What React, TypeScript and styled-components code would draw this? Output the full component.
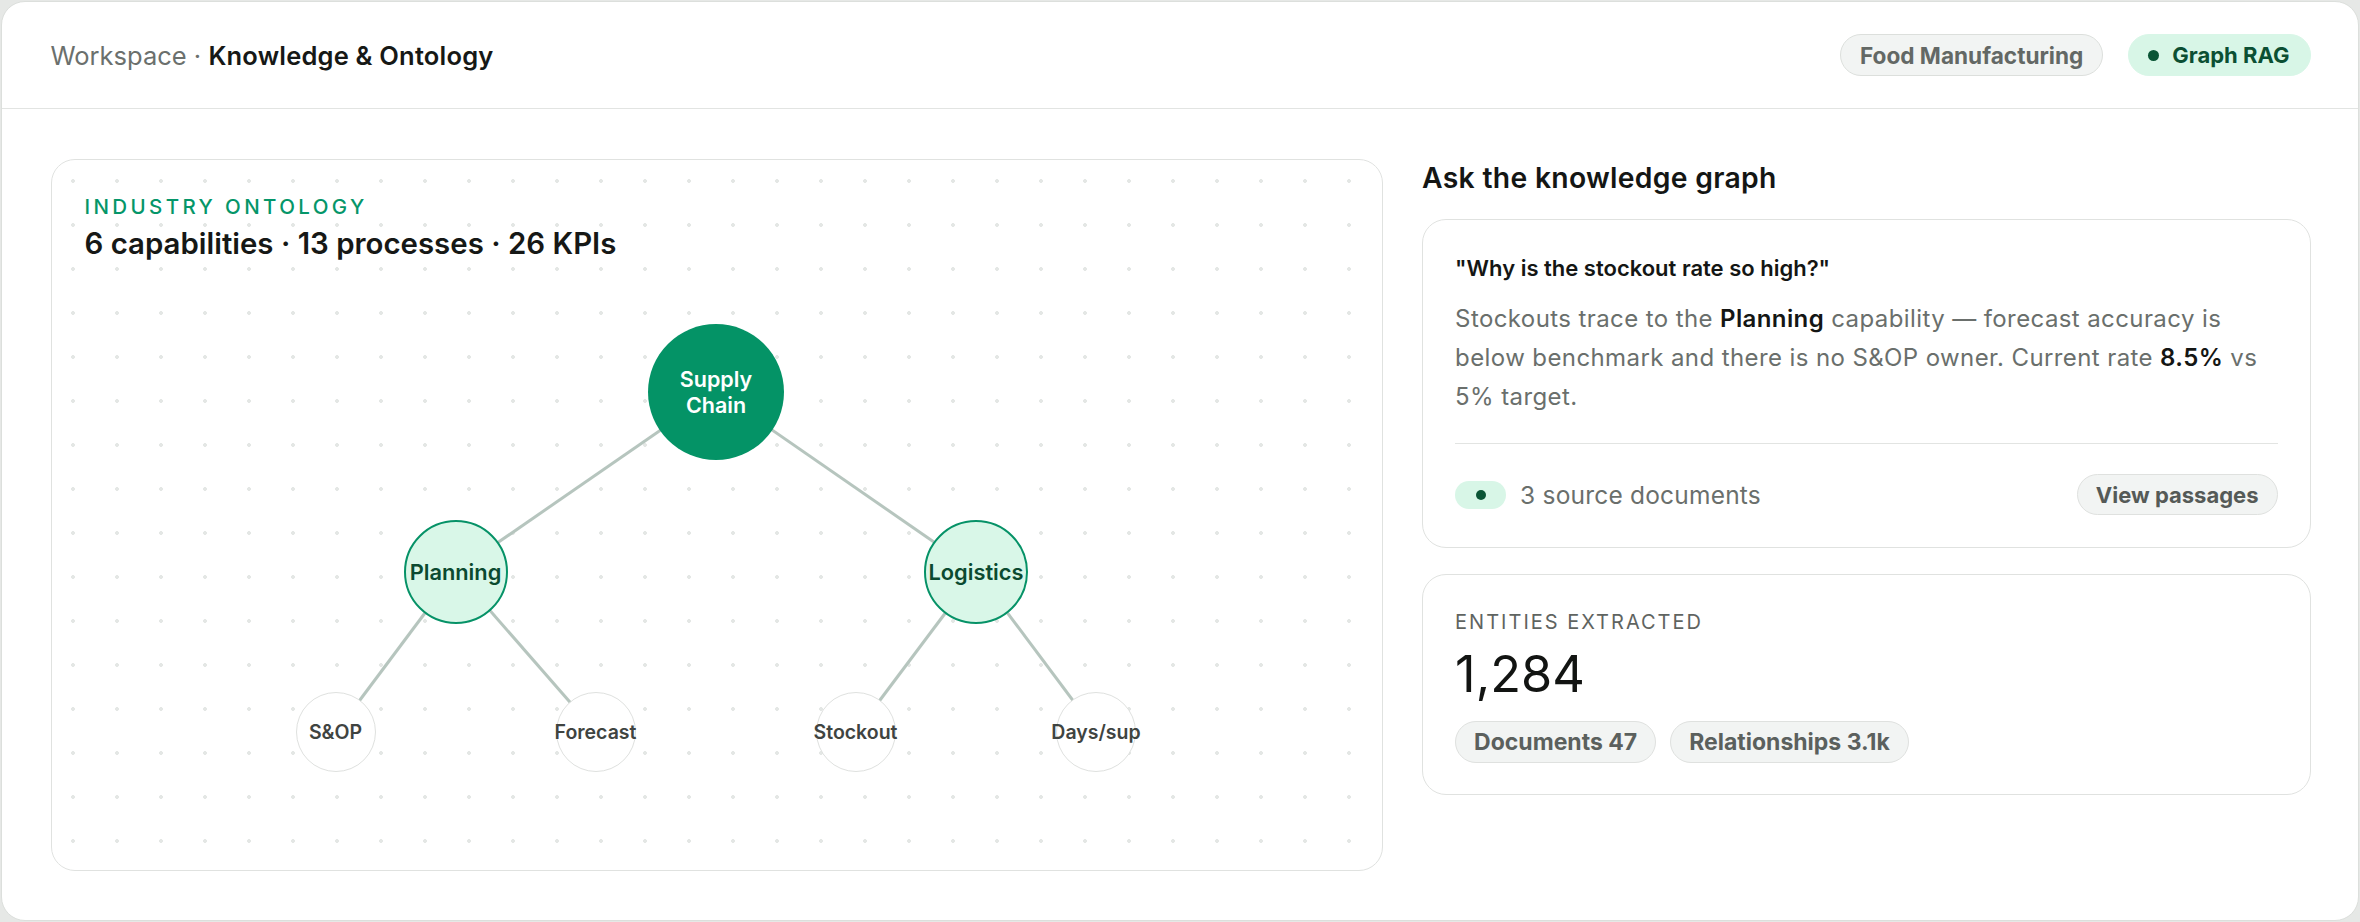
import styled, { createGlobalStyle } from 'styled-components'

const GlobalStyle = createGlobalStyle`
  html, body {
    margin: 0;
    padding: 0;
    background: #e6e8e6;
  }
  body {
    font-family: Inter, 'Noto Sans', sans-serif;
    -webkit-font-smoothing: antialiased;
  }
  * {
    box-sizing: border-box;
  }
`

type NodeKind = 'root' | 'capability' | 'kpi'

interface GraphNode {
  id: string
  label: string
  kind: NodeKind
  x: number
  y: number
}

const nodes: GraphNode[] = [
  { id: 'supply', label: 'Supply Chain', kind: 'root', x: 631.5, y: 129.5 },
  { id: 'planning', label: 'Planning', kind: 'capability', x: 371, y: 309.5 },
  { id: 'logistics', label: 'Logistics', kind: 'capability', x: 891.5, y: 309.5 },
  { id: 'sop', label: 'S&OP', kind: 'kpi', x: 251, y: 470 },
  { id: 'forecast', label: 'Forecast', kind: 'kpi', x: 511, y: 470 },
  { id: 'stockout', label: 'Stockout', kind: 'kpi', x: 771, y: 470 },
  { id: 'days', label: 'Days/sup', kind: 'kpi', x: 1011.5, y: 470 },
]

const edges: [string, string][] = [
  ['supply', 'planning'],
  ['supply', 'logistics'],
  ['planning', 'sop'],
  ['planning', 'forecast'],
  ['logistics', 'stockout'],
  ['logistics', 'days'],
]

const byId = (id: string) => nodes.find((n) => n.id === id)!

const App = () => {
  return (
    <>
      <GlobalStyle />
      <Frame>
        <TopBar>
          <Crumb>
            Workspace · <strong>Knowledge &amp; Ontology</strong>
          </Crumb>
          <Badges>
            <Badge>Food Manufacturing</Badge>
            <Badge $live>
              <Dot />
              Graph RAG
            </Badge>
          </Badges>
        </TopBar>

        <Main>
          <OntologyCard>
            <Eyebrow>Industry ontology</Eyebrow>
            <CardTitle>6 capabilities · 13 processes · 26 KPIs</CardTitle>
            <Canvas>
              <EdgeLayer>
                {edges.map(([a, b]) => {
                  const from = byId(a)
                  const to = byId(b)
                  return (
                    <line
                      key={a + b}
                      x1={from.x}
                      y1={from.y}
                      x2={to.x}
                      y2={to.y}
                      stroke="#b6c5be"
                      strokeWidth={3}
                    />
                  )
                })}
              </EdgeLayer>
              {nodes.map((node) => (
                <Node key={node.id} $kind={node.kind} style={{ left: node.x, top: node.y }}>
                  {node.label}
                </Node>
              ))}
            </Canvas>
          </OntologyCard>

          <Side>
            <SideTitle>Ask the knowledge graph</SideTitle>
            <Panel>
              <Question>"Why is the stockout rate so high?"</Question>
              <Answer>
                Stockouts trace to the <strong>Planning</strong> capability — forecast accuracy is
                <br />
                below benchmark and there is no S&amp;OP owner. Current rate <strong>8.5%</strong> vs
                <br />
                5% target.
              </Answer>
              <PanelFooter>
                <Sources>
                  <SourcePill>
                    <Dot />
                  </SourcePill>
                  3 source documents
                </Sources>
                <GhostButton>View passages</GhostButton>
              </PanelFooter>
            </Panel>

            <Panel $stat>
              <StatLabel>Entities extracted</StatLabel>
              <StatValue>1,284</StatValue>
              <Tags>
                <Tag>Documents 47</Tag>
                <Tag>Relationships 3.1k</Tag>
              </Tags>
            </Panel>
          </Side>
        </Main>
      </Frame>
    </>
  )
}

const Frame = styled.div`
  margin: 1px;
  height: 920px;
  background: #fff;
  border: 1.5px solid #dcdfdc;
  border-radius: 24px;
  display: flex;
  flex-direction: column;
  overflow: hidden;
`

const TopBar = styled.header`
  height: 107px;
  flex-shrink: 0;
  display: flex;
  align-items: center;
  justify-content: space-between;
  padding: 0 47.5px 0 48.5px;
  border-bottom: 1.5px solid #e2e4e2;
`

const Crumb = styled.div`
  font-size: 25.5px;
  color: #6b706d;

  strong {
    font-weight: 600;
    color: #161816;
    letter-spacing: 0.2px;
  }
`

const Badges = styled.div`
  display: flex;
  align-items: center;
  gap: 25px;
`

const Badge = styled.span<{ $live?: boolean }>`
  display: inline-flex;
  align-items: center;
  gap: 13px;
  height: 42px;
  padding: ${(p) => (p.$live ? '0 20px 0 19px' : '0 19px')};
  border-radius: 21px;
  border: 1.5px solid ${(p) => (p.$live ? '#d8f6e7' : '#dcdfdc')};
  background: ${(p) => (p.$live ? '#d8f6e7' : '#f2f4f3')};
  color: ${(p) => (p.$live ? '#0b4f33' : '#636865')};
  font-size: ${(p) => (p.$live ? '22px' : '22.6px')};
  font-weight: 700;
`

const Dot = styled.span`
  width: 11px;
  height: 11px;
  border-radius: 50%;
  background: #0b5536;
  flex-shrink: 0;
`

const Main = styled.main`
  display: grid;
  grid-template-columns: 3fr 2fr;
  gap: 39px;
  padding: 50px 47.5px 0 48.5px;
  align-items: start;
`

const OntologyCard = styled.section`
  height: 712px;
  display: flex;
  flex-direction: column;
  padding: 34px 33px 34px;
  border: 1.5px solid #e0e2e0;
  border-radius: 24px;
  background-color: #fff;
  background-image: radial-gradient(circle, #e4e7e5 1.6px, transparent 2.2px);
  background-size: 44px 44px;
  background-position: -1px -1px;
`

const Eyebrow = styled.div`
  font-size: 20.5px;
  line-height: 26px;
  font-weight: 500;
  letter-spacing: 0.165em;
  text-transform: uppercase;
  color: #059669;
`

const CardTitle = styled.h2`
  margin: 6px 0 0;
  font-size: 29.4px;
  line-height: 36px;
  font-weight: 600;
  color: #161816;
`

const Canvas = styled.div`
  position: relative;
  flex: 1;
`

const EdgeLayer = styled.svg`
  position: absolute;
  inset: 0;
  width: 100%;
  height: 100%;
  overflow: visible;
`

const nodeSize: Record<NodeKind, number> = { root: 136, capability: 104, kpi: 80 }

const Node = styled.div<{ $kind: NodeKind }>`
  position: absolute;
  width: ${(p) => nodeSize[p.$kind]}px;
  height: ${(p) => nodeSize[p.$kind]}px;
  transform: translate(-50%, -50%);
  border-radius: 50%;
  display: flex;
  align-items: center;
  justify-content: center;
  text-align: center;
  white-space: ${(p) => (p.$kind === 'root' ? 'normal' : 'nowrap')};
  font-weight: 600;
  ${(p) =>
    p.$kind === 'root'
      ? `
    background: #049366;
    color: #fff;
    font-size: 21.5px;
    line-height: 26px;
    padding: 0 26px;
  `
      : p.$kind === 'capability'
        ? `
    background: #d9f7e8;
    border: 2px solid #069267;
    color: #0b4a30;
    font-size: 21.8px;
  `
        : `
    background: #fff;
    border: 1.5px solid #dfe1df;
    color: #3f4441;
    font-size: 19.5px;
  `}
`

const Side = styled.div`
  display: flex;
  flex-direction: column;
  padding-top: 2px;
`

const SideTitle = styled.h2`
  margin: 0 0 24px;
  font-size: 28.3px;
  line-height: 34px;
  font-weight: 600;
  letter-spacing: 0.3px;
  color: #141614;
`

const Panel = styled.div<{ $stat?: boolean }>`
  border: 1.5px solid #e0e2e0;
  border-radius: 24px;
  padding: ${(p) => (p.$stat ? '33.5px 32px 31.5px' : '33px 32px 32px')};
  margin-top: ${(p) => (p.$stat ? '26px' : '0')};
  background: #fff;
`

const Question = styled.div`
  font-size: 22px;
  line-height: 30px;
  font-weight: 600;
  color: #141614;
`

const Answer = styled.p`
  margin: 16px 0 0;
  font-size: 24px;
  line-height: 39px;
  letter-spacing: 0.4px;
  white-space: nowrap;
  color: #6a6f6c;

  strong {
    font-weight: 600;
    color: #141614;
  }
`

const PanelFooter = styled.div`
  margin-top: 27px;
  padding-top: 30px;
  border-top: 1.5px solid #e2e4e2;
  display: flex;
  align-items: center;
  justify-content: space-between;
`

const Sources = styled.div`
  display: flex;
  align-items: center;
  gap: 14px;
  font-size: 24.5px;
  letter-spacing: 0.2px;
  color: #6a6f6c;
`

const SourcePill = styled.span`
  display: inline-flex;
  align-items: center;
  justify-content: center;
  width: 51px;
  height: 28px;
  border-radius: 14px;
  background: #d8f6e7;

  span {
    width: 10px;
    height: 10px;
  }
`

const GhostButton = styled.button`
  height: 41px;
  padding: 0 18px;
  border-radius: 21px;
  border: 1.5px solid #dfe1df;
  background: #f2f4f3;
  color: #555a57;
  font-family: inherit;
  font-size: 22px;
  font-weight: 700;
`

const StatLabel = styled.div`
  font-size: 20px;
  line-height: 26px;
  letter-spacing: 0.1em;
  text-transform: uppercase;
  color: #5f6461;
`

const StatValue = styled.div`
  margin-top: 10px;
  font-size: 50.5px;
  line-height: 57.6px;
  font-weight: 400;
  color: #121412;
`

const Tags = styled.div`
  margin-top: 18.5px;
  display: flex;
  gap: 14px;
`

const Tag = styled.span`
  display: inline-flex;
  align-items: center;
  height: 42px;
  padding: 0 18px;
  border-radius: 21px;
  border: 1.5px solid #dfe1df;
  background: #f2f4f3;
  color: #5b605d;
  font-size: 23px;
  font-weight: 700;
`

export default App
